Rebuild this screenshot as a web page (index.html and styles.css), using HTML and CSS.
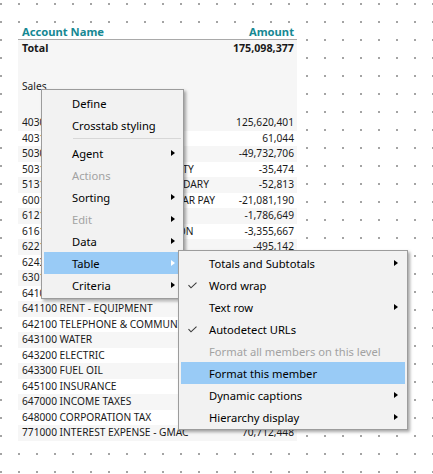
FILE: index.html
```html
<!DOCTYPE html>
<html lang="en">

<head>
    <meta charset="UTF-8">
    <meta name="viewport" content="width=device-width, initial-scale=1.0">
    <title>Crosstab - context menu</title>
    <link rel="stylesheet" href="styles.css">
</head>

<body>
    <div class="canvas">
        <div class="report">
            <div class="head">
                <span class="name">Account Name</span>
                <span class="amount">Amount</span>
            </div>
            <div class="row total">
                <span class="name">Total</span>
                <span class="amount">175,098,377</span>
            </div>
            <div class="group">
                <span class="name">Sales</span>
            </div>
            <div class="rows">
                <div class="row"><span class="name">403000 SALES REVENUE</span><span class="amount">125,620,401</span></div>
                <div class="row"><span class="name">403100 OTHER INCOME</span><span class="amount">61,044</span></div>
                <div class="row"><span class="name">503000 COST OF GOODS SOLD</span><span class="amount">-49,732,706</span></div>
                <div class="row"><span class="name">503100 COST, PRODUCT WARRANTY</span><span class="amount">-35,474</span></div>
                <div class="row"><span class="name">513100 PAYROLL - WAGES, SECONDARY</span><span class="amount">-52,813</span></div>
                <div class="row"><span class="name">600100 SALARIES - OFFICE REGULAR PAY</span><span class="amount">-21,081,190</span></div>
                <div class="row"><span class="name">612100 PAYROLL TAXES</span><span class="amount">-1,786,649</span></div>
                <div class="row"><span class="name">616100 FIXED ASSET DEPRECIATION</span><span class="amount">-3,355,667</span></div>
                <div class="row"><span class="name">622100 OFFICE SUPPLIES</span><span class="amount">-495,142</span></div>
                <div class="row"><span class="name">624300 TRAVEL</span><span class="amount">-312,880</span></div>
                <div class="row"><span class="name">630100 ADVERTISING</span><span class="amount">-1,204,516</span></div>
                <div class="row"><span class="name">641000 RENT - BUILDING</span><span class="amount">-2,640,000</span></div>
                <div class="row"><span class="name">641100 RENT - EQUIPMENT</span><span class="amount">-418,275</span></div>
                <div class="row"><span class="name">642100 TELEPHONE &amp; COMMUNICATIONS</span><span class="amount">-186,409</span></div>
                <div class="row"><span class="name">643100 WATER</span><span class="amount">-24,318</span></div>
                <div class="row"><span class="name">643200 ELECTRIC</span><span class="amount">-157,922</span></div>
                <div class="row"><span class="name">643300 FUEL OIL</span><span class="amount">-63,107</span></div>
                <div class="row"><span class="name">645100 INSURANCE</span><span class="amount">-902,554</span></div>
                <div class="row"><span class="name">647000 INCOME TAXES</span><span class="amount">-8,455,310</span></div>
                <div class="row"><span class="name">648000 CORPORATION TAX</span><span class="amount">-1,320,000</span></div>
                <div class="row"><span class="name">771000 INTEREST EXPENSE - GMAC</span><span class="amount">70,712,448</span></div>
            </div>
        </div>

        <!-- context menu -->
        <div class="menu main-menu">
            <div class="item"><span class="label">Define</span></div>
            <div class="item"><span class="label">Crosstab styling</span></div>
            <div class="separator"></div>
            <div class="item"><span class="label">Agent</span><span class="arrow"></span></div>
            <div class="item disabled"><span class="label">Actions</span></div>
            <div class="item"><span class="label">Sorting</span><span class="arrow"></span></div>
            <div class="item disabled"><span class="label">Edit</span><span class="arrow"></span></div>
            <div class="item"><span class="label">Data</span><span class="arrow"></span></div>
            <div class="item active"><span class="label">Table</span><span class="arrow"></span></div>
            <div class="item"><span class="label">Criteria</span><span class="arrow"></span></div>
        </div>

        <!-- submenu of Table -->
        <div class="menu sub-menu">
            <div class="item"><span class="label">Totals and Subtotals</span><span class="arrow"></span></div>
            <div class="item">
                <svg class="check" width="9" height="7" viewBox="0 0 9 7"><polyline points="0.5,3.2 3,5.8 8.5,0.6" /></svg>
                <span class="label">Word wrap</span>
            </div>
            <div class="item"><span class="label">Text row</span><span class="arrow"></span></div>
            <div class="item">
                <svg class="check" width="9" height="7" viewBox="0 0 9 7"><polyline points="0.5,3.2 3,5.8 8.5,0.6" /></svg>
                <span class="label">Autodetect URLs</span>
            </div>
            <div class="item disabled"><span class="label">Format all members on this level</span></div>
            <div class="item active"><span class="label">Format this member</span></div>
            <div class="item"><span class="label">Dynamic captions</span><span class="arrow"></span></div>
            <div class="item"><span class="label">Hierarchy display</span><span class="arrow"></span></div>
        </div>
    </div>
</body>

</html>
```

FILE: styles.css
```css
body {
    margin: 0;
    font-family: "Noto Sans", "Open Sans", sans-serif;
    color: #1a1a1a;
    background-color: #fff;
}

.canvas {
    position: relative;
    width: 433px;
    height: 474px;
    overflow: hidden;
    background-image: radial-gradient(circle at 1px 1px, #a4a4a4 1px, transparent 1.5px);
    background-size: 18px 18px;
    background-position: 0 3px;
}

/* report table */

.report {
    position: relative;
    top: 24px;
    margin-left: 18px;
    width: 279px;
    font-size: 10.2px;
}

.head {
    display: flex;
    height: 15px;
    line-height: 15px;
    border-bottom: 1px solid #a9a9a9;
    color: #168893;
    font-weight: bold;
    font-size: 11.2px;
}

.name {
    flex: 1;
    padding-left: 4px;
    white-space: nowrap;
    overflow: hidden;
}

.amount {
    padding-right: 3px;
    text-align: right;
    white-space: nowrap;
}

.row {
    display: flex;
    height: 15.5px;
    line-height: 15.5px;
    background: #fff;
}

.rows .row:nth-child(odd) {
    background: #f6f6f6;
}

.total {
    height: 17px;
    line-height: 17px;
    font-weight: bold;
    font-size: 10.7px;
    background: #f6f6f6;
}

.group {
    display: flex;
    padding: 21px 0;
    height: 16px;
    line-height: 16px;
    background: #f6f6f6;
}

/* menus */

.menu {
    position: absolute;
    background: #f2f2f2;
    border: 1px solid #9c9c9c;
    box-shadow: 2px 2px 3px rgba(0, 0, 0, 0.35);
    font-size: 11.2px;
    color: #000;
}

.main-menu {
    left: 41px;
    top: 89px;
    width: 135px;
    padding: 2px 4px 2px 2px;
}

.sub-menu {
    left: 178px;
    top: 250px;
    width: 224px;
    padding: 1px 2px;
    z-index: 2;
}

.item {
    position: relative;
    display: flex;
    align-items: center;
    height: 22px;
    padding-left: 28px;
    white-space: nowrap;
}

.item.disabled {
    color: #a2a2a2;
}

.item.active {
    background: #99cbf6;
}

.separator {
    height: 1px;
    margin: 2px -2px 3px 29px;
    background: #d7d7d7;
}

.arrow {
    margin-left: auto;
    margin-right: 4px;
    margin-top: -1px;
    width: 0;
    height: 0;
    border-left: 4px solid #000;
    border-top: 3.5px solid transparent;
    border-bottom: 3.5px solid transparent;
}

.sub-menu .arrow {
    margin-right: 7px;
}

.item.active .arrow {
    border-left-color: #fff;
}

.check {
    position: absolute;
    left: 7px;
    top: 8px;
}

.check polyline {
    fill: none;
    stroke: #3a3a3a;
    stroke-width: 1.1;
}
```
